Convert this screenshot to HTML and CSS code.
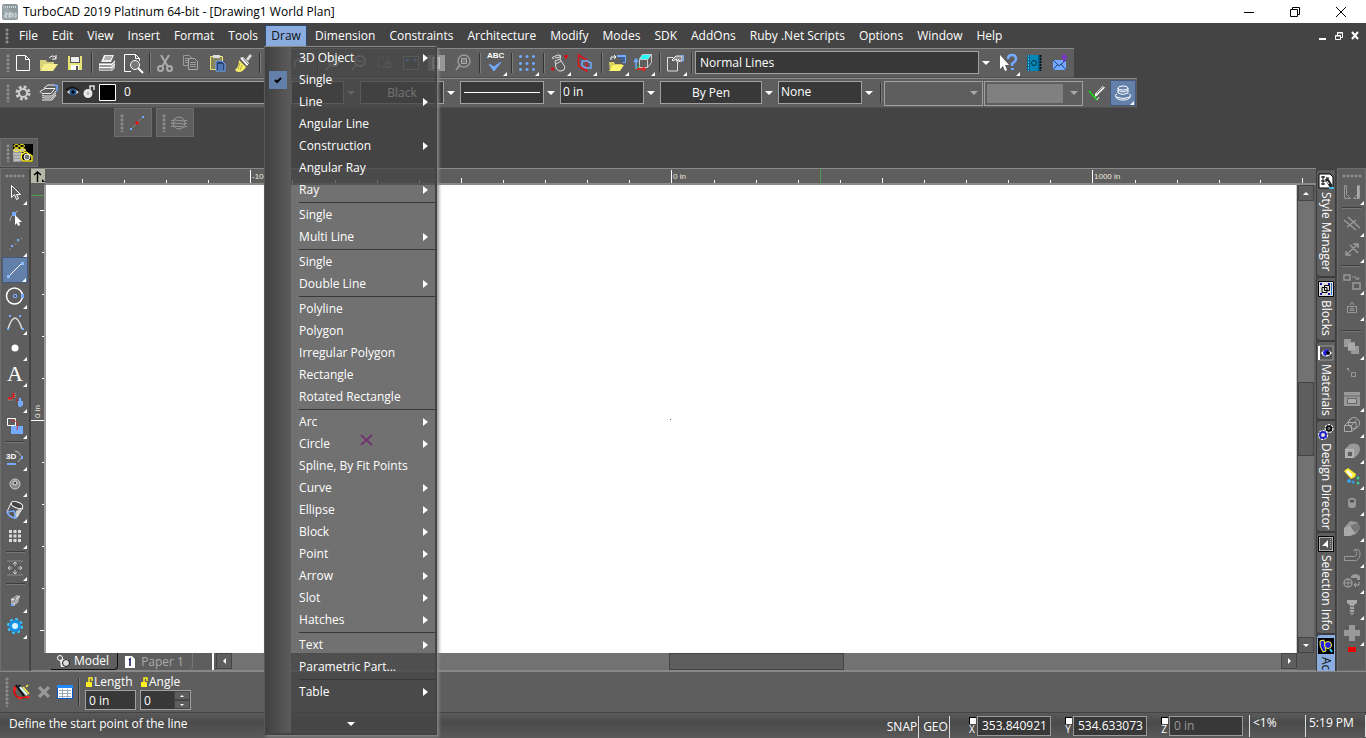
FILE: index.html
```
<!DOCTYPE html>
<html lang="en">
<head>
<meta charset="utf-8">
<title>TurboCAD 2019 Platinum 64-bit - [Drawing1 World Plan]</title>
<link rel="stylesheet" href="styles.css">
</head>
<body>
<header class="titlebar">
  <svg class="app-icon" viewBox="0 0 16 16"><rect width="16" height="16" rx="2" fill="#8d9a9d"/><path d="M1 3h14" stroke="#d5dcde" stroke-width="2" stroke-dasharray="1 1"/><path d="M1 1l14 9v5H1z" fill="#a5b0b2" opacity=".6"/><path d="M3 9h2v2H3v2h2M7 9h2v4H7zM11 9v4M13 9h1v4h-1" fill="none" stroke="#dfe5e6"/></svg>
  <h1 class="title">TurboCAD 2019 Platinum 64-bit - [Drawing1 World Plan]</h1>
  <div class="window-buttons">
    <button aria-label="Minimize"><svg viewBox="0 0 12 12"><path d="M1 6.500h10" stroke="#000"/></svg></button>
    <button aria-label="Restore"><svg viewBox="0 0 12 12"><path d="M1.500 3.500h7v7h-7zM3.500 3V1.500h7v7H9" fill="none" stroke="#000"/></svg></button>
    <button aria-label="Close"><svg viewBox="0 0 12 12"><path d="M1 1l10 10M11 1L1 11" stroke="#000"/></svg></button>
  </div>
</header>

<nav class="menubar">
  <span class="grip"></span>
  <button>File</button><button>Edit</button><button>View</button><button>Insert</button><button>Format</button><button>Tools</button>
  <div class="menu-host">
    <button class="open">Draw</button>
    <div class="menu">
      <button class="sub">3D Object</button>
      <button class="checked"><svg class="tick" viewBox="0 0 18 18"><path d="M6 9l2 2 4-4" fill="none" stroke="#000" stroke-width="2"/></svg>Single</button>
      <button class="sub">Line</button>
      <button>Angular Line</button>
      <button class="sub">Construction</button>
      <button>Angular Ray</button>
      <button class="sub">Ray</button>
      <hr>
      <button>Single</button>
      <button class="sub">Multi Line</button>
      <hr>
      <button>Single</button>
      <button class="sub">Double Line</button>
      <hr>
      <button>Polyline</button>
      <button>Polygon</button>
      <button>Irregular Polygon</button>
      <button>Rectangle</button>
      <button>Rotated Rectangle</button>
      <hr>
      <button class="sub">Arc</button>
      <button class="sub">Circle</button>
      <button>Spline, By Fit Points</button>
      <button class="sub">Curve</button>
      <button class="sub">Ellipse</button>
      <button class="sub">Block</button>
      <button class="sub">Point</button>
      <button class="sub">Arrow</button>
      <button class="sub">Slot</button>
      <button class="sub">Hatches</button>
      <hr>
      <button class="sub">Text</button>
      <button>Parametric Part...</button>
      <hr>
      <button class="sub">Table</button>
      <div class="menu-more"></div>
    </div>
  </div>
  <button>Dimension</button><button>Constraints</button><button>Architecture</button><button>Modify</button><button>Modes</button><button>SDK</button><button>AddOns</button><button>Ruby .Net Scripts</button><button>Options</button><button>Window</button><button>Help</button>
  <div class="doc-buttons">
    <button aria-label="Minimize drawing"><svg viewBox="0 0 10 10"><path d="M1 8h7" stroke="#fff" stroke-width="2"/></svg></button>
    <button aria-label="Restore drawing"><svg viewBox="0 0 10 10"><path d="M1.500 4.500h5v4h-5zM3.500 4V1.500h5v5H7M1 5h6M3 2h6" fill="none" stroke="#fff"/></svg></button>
    <button aria-label="Close drawing"><svg viewBox="0 0 10 10"><path d="M2 1l6 7M8 1L2 8" stroke="#fff" stroke-width="2"/></svg></button>
  </div>
</nav>

<div class="toolbar">
  <span class="grip"></span>
  <button class="tool" aria-label="New"><svg viewBox="0 0 22 22"><path d="M4.500 3.500h9l4 4v11h-13zM13.500 3.500v4h4" fill="none" stroke="#fff"/></svg></button>
  <button class="tool" aria-label="Open"><svg viewBox="0 0 22 22"><path d="M2 8h6l1 2h7v3H7l-5 5z" fill="#d8d27c"/><path d="M6 12h14l-5 7H2z" fill="#f6ef8c"/><path d="M11 6q4-4 7 0M18 3v4h-4" fill="none" stroke="#fff"/></svg></button>
  <button class="tool" aria-label="Save"><svg viewBox="0 0 22 22"><path d="M4 4h14v14H4z" fill="#e6e477"/><path d="M6 4h10v7H6z" fill="#555"/><path d="M7 5h8v5H7z" fill="#eee"/><path d="M7 13h8v5H7z" fill="#fff"/><path d="M12 14h2v4h-2z" fill="#555"/></svg></button>
  <i class="sep"></i>
  <button class="tool" aria-label="Print"><svg viewBox="0 0 22 22"><path d="M8 3h10l-3 7H5z" fill="#eee"/><path d="M9 5h7M8 7h7" stroke="#777"/><path d="M3 11h13l3-3v8l-3 3H3z" fill="#bbb"/><path d="M3 12.500h13M3 15.500h13M16 12l3-3M16 15l3-3" stroke="#fff"/><path d="M4 14h11M4 17h11" stroke="#777"/></svg></button>
  <button class="tool" aria-label="Print preview"><svg viewBox="0 0 22 22"><path d="M9 19.500H2.500v-17h11l4 4V9M13.500 2.500v4h4" fill="none" stroke="#fff"/><circle cx="13" cy="13" r="4.500" fill="#777" stroke="#fff"/><path d="M16 16l5 5" stroke="#fff" stroke-width="2"/></svg></button>
  <i class="sep"></i>
  <button class="tool" aria-label="Cut"><svg viewBox="0 0 22 22"><path d="M7 3l7 12M15 3L8 15" stroke="#aaa" stroke-width="2"/><circle cx="6.500" cy="16.500" r="2.500" fill="none" stroke="#aaa" stroke-width="2"/><circle cx="15.500" cy="16.500" r="2.500" fill="none" stroke="#aaa" stroke-width="2"/></svg></button>
  <button class="tool" aria-label="Copy"><svg viewBox="0 0 22 22"><path d="M3.500 3.500h6l2 2v8h-8z" fill="#5e5e5e" stroke="#999"/><path d="M8.500 6.500h6l3 3v8h-9z" fill="#5e5e5e" stroke="#aaa"/><path d="M5 6.500h3M5 8.500h3M5 10.500h3M10 10.500h6M10 12.500h6M10 14.500h6" stroke="#999"/></svg></button>
  <button class="tool" aria-label="Paste"><svg viewBox="0 0 22 22"><path d="M4.500 4.500h12v13h-12z" fill="#88845c" stroke="#eee478"/><path d="M7 3h7v3H7z" fill="#ddd"/><path d="M10 9h6l3 3v7h-9z" fill="#29456e" stroke="#74aaff"/><path d="M12 13h5M12 15h5M12 17h5" stroke="#74aaff"/></svg></button>
  <button class="tool" aria-label="Format painter"><svg viewBox="0 0 22 22"><path d="M14 7l4-5 2 2-4 5z" fill="#d9d9d9"/><path d="M8 6l3-1 6 6-2 3z" fill="#fff"/><path d="M11 6l5 6" stroke="#777"/><path d="M7 8l7 7q-3 5-7 5-3 0-4-2 4-3 4-10z" fill="#f5ec68"/><path d="M8 11l-2 6M10 13l-2 5" stroke="#b5a93a"/></svg></button>
  <i class="sep"></i>
  <button class="tool" aria-label="Undo"><svg viewBox="0 0 22 22"><path d="M5 10h8q4 0 4 4" fill="none" stroke="#999" stroke-width="2"/></svg></button>
  <button class="tool" aria-label="Redo"><svg viewBox="0 0 22 22"><path d="M5 16q-3-9 7-9h4M13 4l4 3-4 4" fill="none" stroke="#999" stroke-width="2"/></svg></button>
  <i class="sep"></i>
  <button class="tool" aria-label="Zoom in"><svg viewBox="0 0 22 22"><circle cx="12" cy="9" r="5" fill="none" stroke="#aaa" stroke-width="2"/><path d="M8 13l-4 5M9 9h6M12 6v6" stroke="#aaa" stroke-width="1.500"/></svg></button>
  <button class="tool" aria-label="Zoom out"><svg viewBox="0 0 22 22"><circle cx="12" cy="9" r="5" fill="none" stroke="#aaa" stroke-width="2"/><path d="M8 13l-4 5M9 9h6" stroke="#aaa" stroke-width="1.500"/></svg></button>
  <button class="tool" aria-label="Zoom window"><svg viewBox="0 0 22 22"><path d="M4 5h10v10H4z" fill="none" stroke="#999" stroke-dasharray="2"/><circle cx="14" cy="13" r="3" fill="none" stroke="#aaa"/></svg></button>
  <button class="tool" aria-label="Zoom extents"><svg viewBox="0 0 22 22"><path d="M3.500 4.500h15v13h-15z" fill="#555" stroke="#999"/><path d="M5 8h4M7 6v4M13 8h4M15 6v4" stroke="#6fa8ff"/></svg></button>
  <button class="tool" aria-label="Full view"><svg viewBox="0 0 22 22"><path d="M2 3h17v16H2z" fill="#999"/><path d="M6 5h8v12H6z" fill="#ddd"/><path d="M8 8h4M8 10h4M8 12h4" stroke="#555"/></svg></button>
  <button class="tool" aria-label="Zoom selection"><svg viewBox="0 0 22 22"><circle cx="12" cy="9" r="6" fill="none" stroke="#999" stroke-width="1.500"/><path d="M9.500 6.500h5v5h-5z" fill="#777" stroke="#aaa"/><path d="M8 13l-4 5" stroke="#999" stroke-width="2"/></svg></button>
  <i class="sep"></i>
  <button class="tool more" aria-label="Spelling"><span class="abc">ABC</span><svg viewBox="0 0 22 22"><path d="M5 12l5 7 7-9-7 5z" fill="#74aaff" stroke="#74aaff"/></svg></button>
  <i class="sep"></i>
  <button class="tool more" aria-label="Grid"><svg viewBox="0 0 22 22"><path d="M3 4.500h3M9.500 4.500h3M16 4.500h3M3 11.500h3M9.500 11.500h3M16 11.500h3M3 17.500h3M9.500 17.500h3M16 17.500h3M4.500 3v3M11 3v3M17.500 3v3M4.500 10v3M11 10v3M17.500 10v3M4.500 16v3M11 16v3M17.500 16v3" stroke="#74aaff" stroke-width="1.500"/></svg></button>
  <i class="sep"></i>
  <button class="tool more" aria-label="Snap"><svg viewBox="0 0 22 22"><path d="M7 9l5-2 5 8q0 4-4 4-3 1-5-3zM8 12l5-3M6 7q-3-1-1-2l5-2q4 0 2 2L7 6M11 3q3 1 1 4" fill="none" stroke="#ddd"/><path d="M16 4h4M18 4v3M3 17h3M4.500 15.500v3" stroke="#e00" stroke-width="1.500"/></svg></button>
  <button class="tool more" aria-label="Workplane"><svg viewBox="0 0 22 22"><path d="M4.500 3l8 5v11l-8-5z" fill="none" stroke="#e0121d" stroke-width="1.500"/><path d="M8 9v5M8 9h5l4 2v5h-5l-4-2" fill="none" stroke="#74aaff" stroke-width="1.500"/></svg></button>
  <i class="sep"></i>
  <button class="tool more" aria-label="Load workspace"><svg viewBox="0 0 22 22"><path d="M3 10h5l1 2h7v3H7l-3 4z" fill="#d9d05b"/><path d="M7 13h11l-4 6H3z" fill="#fbf46f"/><path d="M11.500 3.500h8v7h-3" fill="#41618d" stroke="#74aaff"/><path d="M11 4h9" stroke="#74aaff" stroke-width="2"/><path d="M5 8V5h5M8 3l2 2-2 2" fill="none" stroke="#fff"/></svg></button>
  <button class="tool more" aria-label="Camera"><svg viewBox="0 0 22 22"><path d="M10 3h9l-3 4H7z" fill="#2ff"/><path d="M7.500 7.500h8v8h-8zM15.500 7.500l4-5v8l-4 5M7.500 7.500l3-5h9" fill="none" stroke="#ccc"/><path d="M4 17V8M2 10l2-3 2 3" stroke="#74aaff" fill="none" stroke-width="1.500"/><path d="M4 17h9M11 15l2 2-2 2" stroke="#e22" fill="none" stroke-width="1.500"/><path d="M4 17l4-4" stroke="#2c4"/></svg></button>
  <i class="sep"></i>
  <button class="tool more" aria-label="Properties"><svg viewBox="0 0 22 22"><path d="M13.500 10v9h-10V5.500h6" fill="none" stroke="#ddd"/><path d="M8 8l4-4h6v5h-4l-2-2-3 2z" fill="#888" stroke="#eee"/><path d="M12 8l2 3M14 7l2 3" stroke="#eee"/><path d="M17 3.500h2.500V9H17" fill="none" stroke="#74aaff"/></svg></button>
  <i class="sep"></i>
  <div class="combo style-combo"><select aria-label="Style"><option>Normal Lines</option></select></div>
  <button class="tool more" aria-label="Context help"><svg viewBox="0 0 22 22"><path d="M3 3v14l3-3 2 5 2-1-2-5h4z" fill="#fff"/><path d="M11 7q0-4 4-4t4 4q0 2-4 5v2" fill="none" stroke="#74aaff" stroke-width="2.500"/><path d="M14 16h3v2h-3z" fill="#74aaff"/></svg></button>
  <button class="tool" aria-label="Web book"><svg viewBox="0 0 22 22"><path d="M4 3h14v16H4z" fill="#06628c"/><path d="M7 3h8v16H7z" fill="#0787b8"/><circle cx="11" cy="11" r="2.500" fill="none" stroke="#034"/><path d="M5.500 3v16" stroke="#4bd" stroke-dasharray="2 1"/><path d="M17.500 3v16" stroke="#111" stroke-width="2" stroke-dasharray="2 1"/></svg></button>
  <button class="tool" aria-label="Send mail"><svg viewBox="0 0 22 22"><path d="M4 8h13v10H4z" fill="#74aaff"/><path d="M4 8l6 6 7-6M4 18l5-6M17 18l-5-6" fill="none" stroke="#1f3f78"/><path d="M15 10V4M13 6l2-3 3 3" fill="none" stroke="#73c" stroke-width="2"/></svg></button>
</div>

<div class="toolbar">
  <span class="grip"></span>
  <button class="tool" aria-label="Settings"><svg viewBox="0 0 22 22"><circle cx="11" cy="11" r="6" fill="none" stroke="#ccc" stroke-width="3" stroke-dasharray="2.700 2"/><circle cx="11" cy="11" r="4" fill="none" stroke="#ccc" stroke-width="2"/></svg></button>
  <button class="tool" aria-label="Layers"><svg viewBox="0 0 22 22"><path d="M2 9.500l5-3h10l-4 5H4zM4 13l2 1h8l4-5M4 15l2 1h8l4-5M4 18h10l4-5M6 6l4-3h7" fill="none" stroke="#eee"/><path d="M16 3.500h3v6" fill="none" stroke="#74aaff" stroke-width="1.500"/></svg></button>
  <div class="combo layer-combo">
    <svg class="layer-icons" viewBox="0 0 56 22"><path d="M4 11q6-6 12 0-6 6-12 0z" fill="#ddd"/><circle cx="10" cy="11" r="3.500" fill="#234e86"/><circle cx="10" cy="11" r="1.500" fill="#000"/><path d="M3 9q7-6 13 1" fill="none" stroke="#111" stroke-width="1.500"/><circle cx="25" cy="12.500" r="4.500" fill="#e6e6e6"/><path d="M27 9V5h4v4" fill="none" stroke="#ddd" stroke-width="1.500"/><path d="M25 11v3" stroke="#888"/><path d="M36.500 3.500h16v16h-16z" fill="#000" stroke="#fff"/></svg>
    <select aria-label="Layer"><option>0</option></select>
  </div>
  <div class="combo narrow-combo off"><select aria-label="Pen source"><option></option></select></div>
  <div class="combo centered"><select aria-label="Color"><option>Black</option></select></div>
  <div class="combo line-combo"><select aria-label="Line pattern"><option></option></select></div>
  <div class="combo"><select aria-label="Line width"><option>0 in</option></select></div>
  <div class="combo centered wide"><select aria-label="Brush color"><option>By Pen</option></select></div>
  <div class="combo"><select aria-label="Brush pattern"><option>None</option></select></div>
  <i class="sep gap"></i>
  <div class="combo flat"><select aria-label="Material" disabled><option></option></select></div>
  <div class="combo flat filled"><select aria-label="Material preview" disabled><option></option></select></div>
  <button class="tool" aria-label="Pick style"><svg viewBox="0 0 22 22"><path d="M10 11l7-7 2 2-7 7z" fill="#eee" stroke="#ccc"/><path d="M11 11l7-7M12 13l7-7" stroke="#777"/><path d="M9 11v4l3-2" fill="#fff"/><path d="M3 9l8 9" stroke="#1d1" stroke-width="1.500"/><path d="M11 18l2-3" stroke="#eee"/></svg></button>
  <button class="tool more on" aria-label="Render"><svg viewBox="0 0 22 22"><ellipse cx="11" cy="6" rx="5" ry="2" fill="none" stroke="#fff"/><path d="M6 6v5q5 3 10 0V6M6 8.500q5 3 10 0M5 12q-3 1-1 3 7 3 14 0 2-2-1-3M4 15q1 3 7 3t7-3" fill="none" stroke="#fff"/></svg></button>
</div>

<div class="dock dock-indent">
  <div class="mini"><span class="grip"></span><button class="tool" aria-label="Line tool"><svg viewBox="0 0 22 22"><path d="M5 17L17 5" stroke="#999" stroke-dasharray="2 1"/><path d="M4 16h2v2H4zM16 4h2v2h-2z" fill="#74aaff"/><path d="M9.500 9.500h3v3h-3z" fill="#e11"/></svg></button></div>
  <div class="mini"><span class="grip"></span><button class="tool" aria-label="Sphere tool"><svg viewBox="0 0 22 22"><circle cx="11" cy="11" r="6" fill="none" stroke="#999"/><path d="M3 8.500q4-1 8 0t8 0M3 11.500q4-1 8 0t8 0M3 14.500q4-1 8 0t8 0" fill="none" stroke="#999"/></svg></button></div>
</div>
<div class="dock">
  <div class="mini"><span class="grip"></span><button class="tool" aria-label="Database"><svg viewBox="0 0 22 22"><path d="M1 2h20v18H1z" fill="#000"/><path d="M1 8h9v12H1z" fill="#999"/><ellipse cx="4.500" cy="4" rx="2.500" ry="1.500" fill="none" stroke="#fe2"/><ellipse cx="10" cy="4" rx="2.500" ry="1.500" fill="none" stroke="#fe2"/><ellipse cx="4.500" cy="8" rx="3" ry="1.500" fill="#bbb" stroke="#fe2"/><ellipse cx="10.500" cy="8" rx="3" ry="1.500" fill="#bbb" stroke="#fe2"/><path d="M1 12h9M2 15h6M2 18h6" stroke="#ddd"/><path d="M10 12l4-2 6 4v5h-9q-3-3-1-7z" fill="none" stroke="#fe2" stroke-width="1.500"/><circle cx="15" cy="15" r="3" fill="#777" stroke="#fff"/></svg></button></div>
</div>

<main class="workspace">
  <aside class="side left">
    <span class="grip-h"></span>
    <button class="tool more" aria-label="Select"><svg viewBox="0 0 22 22"><path d="M7.500 4.500v12l3-3 2 5 2-1-2-4h4z" fill="#5e5e5e" stroke="#fff"/></svg></button>
    <button class="tool" aria-label="Edit node"><svg viewBox="0 0 22 22"><path d="M6 14q0-6 8-10" fill="none" stroke="#aaa"/><path d="M8 5h4v4H8z" fill="#74aaff"/><path d="M11 8v10l2-2 1 3 2-1-1-3h3z" fill="#fff"/></svg></button>
    <button class="tool more" aria-label="Construction"><svg viewBox="0 0 22 22"><path d="M5 17L19 4" stroke="#999" stroke-dasharray="2"/><path d="M7 12h2v2H7zM13 6h2v2h-2z" fill="#74aaff"/></svg></button>
    <button class="tool more on" aria-label="Line"><svg viewBox="0 0 22 22"><path d="M4 18L18 4" stroke="#fff"/><path d="M3 16h3v3H3zM17 3h3v3h-3z" fill="#8fbcff"/></svg></button>
    <button class="tool more" aria-label="Circle"><svg viewBox="0 0 22 22"><circle cx="10.500" cy="11" r="8" fill="none" stroke="#fff" stroke-width="1.500"/><path d="M9.500 9.500h3v3h-3z" fill="none" stroke="#74aaff"/><path d="M17 9h3v4h-3z" fill="#74aaff"/></svg></button>
    <button class="tool more" aria-label="Curve"><svg viewBox="0 0 22 22"><path d="M4 18Q11-4 18 18" fill="none" stroke="#ddd" stroke-width="1.500"/><path d="M5 4h2v2H5zM15 4h2v2h-2zM3 17h2v2H3zM18 17h2v2h-2z" fill="#74aaff"/></svg></button>
    <button class="tool more" aria-label="Point"><svg viewBox="0 0 22 22"><circle cx="11" cy="11" r="3.500" fill="#fff"/></svg></button>
    <button class="tool more letter" aria-label="Text">A</button>
    <button class="tool more" aria-label="Snap tools"><svg viewBox="0 0 22 22"><path d="M9.500 4v5M4 9.500h4" fill="none" stroke="#e11" stroke-width="2"/><path d="M11 4v5M4 11h6" stroke="#aaa" stroke-dasharray="1"/><path d="M12 10h1v2h-1z" fill="#e11"/><path d="M14 12h5v4l-2 2h-2l-1-2z" fill="#74aaff"/><path d="M16 9v3" stroke="#74aaff" stroke-width="2"/></svg></button>
    <button class="tool more" aria-label="Modify"><svg viewBox="0 0 22 22"><path d="M7 11h12v8H7z" fill="#74aaff"/><path d="M3.500 3.500h8v7h-8z" fill="none" stroke="#fff"/><path d="M7 5q9 0 6 10" fill="none" stroke="#d33"/></svg></button>
    <i class="sep-h"></i>
    <button class="tool more" aria-label="3D tools"><span class="three">3D</span><svg viewBox="0 0 22 22"><path d="M11 4l3 1 4 5-4 5" fill="none" stroke="#bbb"/><path d="M3 17h9M18 9v3" stroke="#74aaff" stroke-width="2"/></svg></button>
    <button class="tool more" aria-label="Sphere"><svg viewBox="0 0 22 22"><circle cx="11" cy="11" r="5" fill="#888" stroke="#ccc"/><circle cx="11" cy="10" r="2" fill="#444" stroke="#eee"/></svg></button>
    <button class="tool more" aria-label="Cylinder"><svg viewBox="0 0 22 22"><path d="M8 4l11 4v3l-6 7-9-5z" fill="#555"/><path d="M12 12l6-4-4 10h-4z" fill="#ccc"/><ellipse cx="13" cy="6" rx="6" ry="3" fill="#444" stroke="#fff" transform="rotate(20 13 6)"/><path d="M7 4l-4 9q3 6 9 6l7-10" fill="none" stroke="#eee"/><path d="M3 13l7-1 2 7q-7 0-9-6" fill="none" stroke="#74aaff" stroke-width="1.500"/></svg></button>
    <button class="tool more" aria-label="Mesh"><svg viewBox="0 0 22 22"><path d="M5 6.500h12M5 11h12M5 15.500h12" stroke="#ddd" stroke-width="3" stroke-dasharray="3 1.500"/></svg></button>
    <i class="sep-h"></i>
    <button class="tool more" aria-label="Pan"><svg viewBox="0 0 22 22"><path d="M3 4h16M3 18h16" stroke="#888"/><path d="M11 5v4M11 13v4M4 11h4M14 11h4M9 7l2-2 2 2M9 15l2 2 2-2M6 9l-2 2 2 2M16 9l2 2-2 2" fill="none" stroke="#ccc"/></svg></button>
    <i class="sep-h"></i>
    <button class="tool more" aria-label="Wall"><svg viewBox="0 0 22 22"><path d="M7 10l6-4 3 1-2 7-6 3-1-2z" fill="#aaa"/><path d="M7 10l4 1-1 6M11 11l5-4" stroke="#eee" fill="none"/><path d="M12 8l-2 6" stroke="#777"/><path d="M7 16h3" stroke="#74aaff" stroke-width="2"/></svg></button>
    <button class="tool more" aria-label="Options"><svg viewBox="0 0 22 22"><circle cx="11" cy="11" r="7" fill="none" stroke="#3bc6ff" stroke-width="2" stroke-dasharray="3 2.500"/><circle cx="11" cy="11" r="4.500" fill="#d9f5ff" stroke="#1593e8" stroke-width="3"/></svg></button>
  </aside>

  <section class="drawing">
    <div class="ruler-row">
      <button class="origin" aria-label="Origin"><svg viewBox="0 0 14 14"><path d="M6.500 13V3M3 6l3.500-3L10 6" fill="none" stroke="#000" stroke-width="1.500"/><path d="M11 10l3 3h-3z" fill="#000"/></svg></button>
      <svg class="ruler" height="14"><path d="M37.500 14v-4M79.500 14v-3M121.500 14v-3M163.500 14v-3M205.500 14V1M247.500 14v-3M290.500 14v-3M332.500 14v-3M374.500 14v-3M416.500 14v-5M458.500 14v-3M500.500 14v-3M542.500 14v-3M584.500 14v-3M626.500 14V1M669.500 14v-3M711.500 14v-3M753.500 14v-3M795.500 14v-3M837.500 14v-5M879.500 14v-3M921.500 14v-3M963.500 14v-3M1005.500 14v-3M1047.500 14V1M1090.500 14v-3M1132.500 14v-3M1174.500 14v-3M1215.500 14v-3M1257.500 14v-5" stroke="#fff"/><path d="M775.500 0v14" stroke="#4f9e4f"/><text x="207" y="10">-1000 in</text><text x="628" y="10">0 in</text><text x="1049" y="10">1000 in</text></svg>
    </div>
    <div class="view-row">
      <svg class="ruler ruler-v" width="13"><path d="M14 25.500H9M14 67.500h-3M14 109.500h-3M14 151.500h-3M14 193.500h-3M14 235.500H0M14 277.500h-3M14 319.500h-3M14 361.500h-3M14 403.500h-3M14 445.500H9" stroke="#fff"/><path d="M0 10.500h14" stroke="#4f9e4f"/><text transform="translate(9 233) rotate(-90)">0 in</text></svg>
      <div class="canvas">
        <svg width="100%" height="100%"><path d="M315 250l11 10M326 250l-11 10" stroke="#f0f" stroke-width="2"/><path d="M624 234h1v1h-1z" fill="#555"/></svg>
      </div>
      <div class="vscroll"><button class="up" aria-label="Scroll up"></button><span class="vthumb"></span><button class="down" aria-label="Scroll down"></button></div>
    </div>
    <div class="tabs-row">
      <button class="sheet active"><svg viewBox="0 0 14 14"><circle cx="4" cy="4" r="2.500" fill="none" stroke="#fff"/><path d="M4 7l3-2h5v5l-2 3H5z" fill="#eee"/><circle cx="10" cy="9" r="3.500" fill="#ddd" stroke="#111"/></svg>Model</button>
      <button class="sheet"><svg viewBox="0 0 14 14"><path d="M2 1h7l3 3v9H2z" fill="#fff"/><path d="M6 5l1-1v7" fill="none" stroke="#115" stroke-width="1.500"/></svg>Paper 1</button>
      <span class="split"></span>
      <div class="hscroll"><button class="prev" aria-label="Scroll left"></button><span class="hthumb"></span><button class="next" aria-label="Scroll right"></button></div>
    </div>
  </section>

  <nav class="palettes">
    <button class="p-style"><svg viewBox="0 0 16 16"><path d="M1 1h11l3 3v11H1z" fill="#fff" stroke="#000"/><path d="M3 4h4M5 3v9M8 5h3M3 8h6M3 11h4" stroke="#000"/><path d="M7 6l3-1 5 8-3 2z" fill="#222"/><path d="M9 8l2 3" stroke="#fff"/><path d="M11 15h5" stroke="#4bd" stroke-width="2"/></svg>Style Manager</button>
    <button class="p-blocks"><svg viewBox="0 0 16 16"><path d="M.500.500h15v15H.500z" fill="#ddd" stroke="#000"/><path d="M4 6.500h5v5H4zM6.500 4.500h5v5h-5z" fill="none" stroke="#000"/><path d="M2 2h2v2H2zM10 2h2v2h-2zM2 12h2v2H2zM10 12h2v2h-2z" fill="#11a"/><path d="M13.500 2v12" stroke="#27c"/></svg>Blocks</button>
    <button class="p-mat"><svg viewBox="0 0 16 16"><path d="M1 1h14v14H1z" fill="#555" stroke="#999"/><path d="M1 1v14" stroke="#fff" stroke-width="2"/><path d="M3 8q5-7 11 0-6 7-11 0z" fill="#fff"/><path d="M5 7q2-4 6-2l-3 6q-3 0-3-4z" fill="#22d"/><circle cx="10" cy="8" r="2" fill="#000"/></svg>Materials</button>
    <button class="p-design"><svg viewBox="0 0 16 16"><circle cx="11" cy="4.500" r="3.500" fill="#666" stroke="#fff" stroke-width="2" stroke-dasharray="2 1"/><circle cx="11" cy="4.500" r="2.500" fill="none" stroke="#000" stroke-width="1.500"/><circle cx="5" cy="11" r="4" fill="#ddd" stroke="#fff" stroke-width="2" stroke-dasharray="2 1"/><circle cx="5" cy="11" r="3" fill="#ddd" stroke="#22c" stroke-width="2"/></svg>Design Director</button>
    <button class="p-sel"><svg viewBox="0 0 16 16"><path d="M1 1h14v14H1z" fill="#555" stroke="#fff"/><path d="M.500.500h15v15H.500z" fill="none" stroke="#000"/><path d="M4 10l6-6v8l-2-2z" fill="#fff"/><path d="M12.500 3v10" stroke="#aaa" stroke-dasharray="1"/></svg>Selection Info</button>
    <button class="p-active"><svg viewBox="0 0 16 16"><path d="M0 0h16v16H0z" fill="#000"/><path d="M2 3l4-1 2 11-3 1q-4-6-3-11z" fill="#22d" stroke="#ff3"/><circle cx="10" cy="7" r="3.500" fill="#22d" stroke="#ff3"/><path d="M12 11l2 3" stroke="#3cf" stroke-width="2"/></svg>Ac</button>
  </nav>

  <aside class="side right">
    <span class="grip-h"></span>
    <button class="tool more" aria-label="Trim"><svg viewBox="0 0 22 22"><path d="M3.500 4.500h2v9l4 4h-6zM18.500 4.500h-2v9l-4 4h6z" fill="none" stroke="#999"/><path d="M17 5v12" stroke="#aaa" stroke-width="2"/></svg></button>
    <i class="sep-h"></i>
    <button class="tool more" aria-label="Parallel"><svg viewBox="0 0 22 22"><path d="M3 7l12 10M7 4l12 11M6 14l9-7" stroke="#999" stroke-width="1.500"/></svg></button>
    <button class="tool more" aria-label="Stretch"><svg viewBox="0 0 22 22"><path d="M5 16L17 5M5 12v4h5M12 5h5v4M9 6l8 8" fill="none" stroke="#999" stroke-width="1.500"/></svg></button>
    <i class="sep-h"></i>
    <button class="tool more" aria-label="Copy linear"><svg viewBox="0 0 22 22"><path d="M3 4h6v5H3zM12 12h7v6h-7z" fill="none" stroke="#999" stroke-width="1.500"/><path d="M11 6q5-1 6 3M14 7l3 2 1-3" fill="none" stroke="#999"/></svg></button>
    <button class="tool more" aria-label="Assemble"><svg viewBox="0 0 22 22"><path d="M6.500 9.500h9v6h-9zM9 8l2-3 2 3M9.500 11.500h3v2h-3z" fill="none" stroke="#999"/></svg></button>
    <i class="sep-h late"></i>
    <button class="tool more" aria-label="Order"><svg viewBox="0 0 22 22"><path d="M3 3h7v3h4v4h4v8h-8v-3H7v-4H3z" fill="#999"/><path d="M7 7h7v7H7z" fill="#aaa"/></svg></button>
    <button class="tool" aria-label="Explode"><svg viewBox="0 0 22 22"><path d="M6 6h2v2H6zM8 9h1v1H8z" fill="#999"/><path d="M10.500 10.500h4v4h-4z" fill="none" stroke="#999"/></svg></button>
    <button class="tool more" aria-label="Group"><svg viewBox="0 0 22 22"><path d="M3 4h16v14H3z" fill="#999"/><path d="M3 8h16M6.500 10.500h9v5h-9z" stroke="#666" fill="#aaa"/></svg></button>
    <button class="tool more" aria-label="Add"><svg viewBox="0 0 22 22"><circle cx="13" cy="9" r="5.500" fill="none" stroke="#aaa"/><path d="M3.500 11.500h7v6h-7zM3.500 11.500l7-7M10.500 11.500l5-6M10.500 17.500l5-4M7 8.500h8v5" fill="none" stroke="#aaa"/></svg></button>
    <button class="tool more" aria-label="Subtract"><svg viewBox="0 0 22 22"><path d="M4 9l5-5q9-2 10 5 0 5-6 9H4z" fill="#999"/><path d="M4.500 9.500h8v8h-8z" fill="#aaa" stroke="#bbb"/><path d="M7 12h4v4H7z" fill="#5e5e5e"/></svg></button>
    <button class="tool more" aria-label="Paint"><svg viewBox="0 0 22 22"><path d="M3 5l4-3 8 6-1 3-4 2z" fill="#fe3"/><path d="M6 5l5 5" stroke="#fff" stroke-width="2.500"/><path d="M6 15h4M8 13v4" stroke="#3af" stroke-width="1.500"/><circle cx="17" cy="12" r="1.500" fill="#3c9"/><circle cx="12" cy="16" r="1.500" fill="#39d"/><circle cx="17" cy="17" r="1.500" fill="#3c9"/></svg></button>
    <button class="tool more" aria-label="Barrel"><svg viewBox="0 0 22 22"><rect x="7" y="6" width="8" height="10" rx="3" fill="#999"/><ellipse cx="11" cy="9" rx="2.500" ry="1.500" fill="#555"/></svg></button>
    <button class="tool more" aria-label="Chamfer"><svg viewBox="0 0 22 22"><path d="M3 10l6-7 7 1 3 6-4 6-6 2H3z" fill="#999"/><path d="M9 8l7-3 3 5-5 5z" fill="#777"/><path d="M3 10l6-2 5 7-5 3H3z" fill="#aaa"/></svg></button>
    <button class="tool more" aria-label="Bend"><svg viewBox="0 0 22 22"><path d="M3.500 12.500h10q4-2 1-7h3q4 6-2 11h-12zM12 7l3-2" fill="none" stroke="#999"/></svg></button>
    <button class="tool more" aria-label="Replace"><svg viewBox="0 0 22 22"><circle cx="7" cy="13" r="4" fill="none" stroke="#999" stroke-width="1.500"/><path d="M3 13h8M7 9v8" stroke="#999"/><path d="M10 6q4-4 9 0v4h-3V8h-6z" fill="#999"/><path d="M18 12v3h-5M15 13l-2 2 2 2" fill="none" stroke="#aaa"/></svg></button>
    <button class="tool more" aria-label="Screw"><svg viewBox="0 0 22 22"><path d="M6 4h10v3l-3 2v8l-2 2-2-2V9L6 7z" fill="#aaa"/><path d="M8 10l6 1M8 13l6 1M8 16l6 1" stroke="#666"/></svg></button>
    <button class="tool more plus" aria-label="Append"><svg viewBox="0 0 22 22"><path d="M8 3h6v5h5v6h-5v5H8v-5H3V8h5z" fill="#999"/></svg></button>
    <span class="stop"></span>
  </aside>
</main>

<section class="inspector">
  <span class="grip tall"></span>
  <button class="tool" aria-label="Polyline mode"><svg viewBox="0 0 22 22"><path d="M4 5q-3 10 5 12l8-1" fill="none" stroke="#e00" stroke-width="1.500"/><path d="M5 4l8 11M8 4l3 4" stroke="#111" stroke-width="2"/><path d="M9 6l7 8" stroke="#dff" stroke-width="2"/><path d="M15 6l2-2M12 6l6 7" stroke="#fe4" stroke-width="1.500"/><circle cx="4" cy="8" r="1.500" fill="#f22"/><circle cx="9" cy="17" r="1.500" fill="#f22"/><circle cx="17" cy="16" r="1.500" fill="#f22"/></svg></button>
  <button class="tool small" aria-label="Cancel"><svg viewBox="0 0 22 22"><path d="M5 5l12 12M17 5L5 17" stroke="#999" stroke-width="4"/></svg></button>
  <button class="tool" aria-label="Table"><svg viewBox="0 0 22 22"><path d="M3.500 4.500h15v13h-15z" fill="#fff" stroke="#05c"/><path d="M3 5.500h16" stroke="#28f" stroke-width="3"/><path d="M5 9.500h12M5 12.500h12M5 15.500h12M8.500 8v9M13.500 8v9" stroke="#9ab"/></svg></button>
  <i class="sep"></i>
  <div class="field"><label for="length"><svg viewBox="0 0 8 10"><path d="M1 5h6v5H1z" fill="#fe2"/><path d="M4 5V1h3v3" fill="none" stroke="#fe2" stroke-width="1.500"/></svg>Length</label><input id="length" value="0 in"></div>
  <div class="field"><label for="angle"><svg viewBox="0 0 8 10"><path d="M1 5h6v5H1z" fill="#fe2"/><path d="M4 5V1h3v3" fill="none" stroke="#fe2" stroke-width="1.500"/></svg>Angle</label><div class="spin"><input id="angle" value="0"><div class="spin-buttons"><button class="inc" aria-label="Increase angle"></button><button class="dec" aria-label="Decrease angle"></button></div></div></div>
</section>

<footer class="statusbar">
  <p class="prompt">Define the start point of the line</p>
  <button class="mode">SNAP</button>
  <button class="mode">GEO</button>
  <div class="coord"><label class="axis"><input type="checkbox">X</label><input class="value" aria-label="X coordinate" value="353.840921 in"></div>
  <div class="coord"><label class="axis"><input type="checkbox">Y</label><input class="value" aria-label="Y coordinate" value="534.633073 in"></div>
  <div class="coord"><label class="axis"><input type="checkbox">Z</label><input class="value" aria-label="Z coordinate" value="0 in" disabled></div>
  <span class="cell load">&lt;1%</span>
  <span class="cell clock">5:19 PM</span>
</footer>
</body>
</html>
```

FILE: styles.css
```
* { box-sizing: border-box; }

body {
  margin: 0;
  height: 100vh;
  display: flex;
  flex-direction: column;
  overflow: hidden;
  background: #444;
  color: #fff;
  font: 12px/16px "Open Sans", "Noto Sans", sans-serif;
}

button, input, select {
  font: inherit;
  color: inherit;
  border: 0;
  margin: 0;
  padding: 0;
  background: none;
  border-radius: 0;
  outline: 0;
}

svg { display: block; flex: none; }

/* Title bar */
.titlebar {
  flex: none;
  height: 23px;
  display: flex;
  align-items: center;
  padding-left: 2px;
  background: #fff;
  color: #000;
}
.app-icon { width: 16px; height: 16px; }
.title { margin: 0 auto 0 5px; font-size: 12px; font-weight: 400; }
.window-buttons { display: flex; padding-right: 2px; }
.window-buttons button { width: 46px; height: 20px; display: grid; place-items: center; }
.window-buttons svg { width: 12px; height: 12px; }

/* Menu bar */
.menubar {
  flex: none;
  height: 25px;
  display: flex;
  align-items: center;
  padding-left: 5px;
}
.menubar button { height: 22px; padding: 0 7px; white-space: nowrap; }
.menubar .grip { margin-right: 3px; height: 16px; }
.menu-host { position: relative; margin-right: 1px; }
.menubar .open { width: 42px; background: #8aacde; color: #111; border: 1px solid #2c4770; padding: 0; }
.doc-buttons { display: flex; margin-left: auto; padding-right: 3px; }
.menubar .doc-buttons button { width: 16px; padding: 0 3px; }
.doc-buttons svg { width: 10px; height: 10px; }

.grip {
  flex: none;
  width: 4px;
  height: 18px;
  background: radial-gradient(circle, #8c8c8c 1px, transparent 2px) 0 0 / 4px 4px;
}

/* Draw menu */
.menu {
  position: absolute;
  z-index: 5;
  top: 21px;
  left: -1px;
  width: 173px;
  display: flex;
  flex-direction: column;
  padding-left: 27px;
  border: 1px solid #5a5a5a;
  border-top-color: #8a8a8a;
  border-right: 2px solid #444;
  border-bottom: 2px solid #444;
  background: linear-gradient(90deg, #404040, #5c5c5c) 0 0 / 26px 100% no-repeat, rgba(68, 68, 68, .76);
  background-origin: padding-box;
  box-shadow: 2px 2px 3px rgba(140, 140, 140, .9);
}
.menu button { position: relative; text-align: left; padding: 0 7px; }
.menu hr { height: 1px; margin: 1px 0 1px 7px; border: 0; background: #383838; }
.menu .sub::after {
  content: "";
  position: absolute;
  right: 7px;
  top: 7px;
  border: 4px solid transparent;
  border-left: 5px solid #fff;
  border-right: 0;
}
.tick { position: absolute; left: -23px; top: 2px; width: 18px; height: 18px; background: #6280a9; }
.menu-more { height: 30px; display: grid; place-items: center; padding: 13px 26px 0 0; }
.menu-more::after { content: ""; border: 4px solid transparent; border-top-color: #fff; border-bottom: 0; }

/* Toolbars */
.toolbar {
  flex: none;
  align-self: flex-start;
  height: 30px;
  display: flex;
  align-items: center;
  padding: 0 1px 0 6px;
  background: #5e5e5e;
  border-top: 1px solid #898989;
  border-bottom: 1px solid #505050;
}
.tool { position: relative; flex: none; width: 26px; height: 26px; display: grid; place-items: center; }
.tool svg { width: 22px; height: 22px; }
.tool.small svg { width: 18px; height: 18px; }
.more::after {
  content: "";
  position: absolute;
  right: 1px;
  bottom: 0;
  border-bottom: 4px solid #fff;
  border-left: 4px solid transparent;
}
.on { background: #6280a9; border: 1px solid #47597a; }
.sep { flex: none; width: 6px; height: 20px; border-left: 1px solid #333; background: linear-gradient(#7c7c7c, #7c7c7c) 0 0 / 1px 100% no-repeat; margin-left: 3px; margin-right: -3px; }
.sep.gap { width: 4px; margin: 0 0 0 2px; }
.abc { position: absolute; top: 1px; left: 5px; font: bold 8px/10px "Liberation Sans", Arial, sans-serif; z-index: 1; }

.combo { position: relative; flex: none; width: 100px; height: 24px; padding-right: 16px; }
.combo select {
  appearance: none;
  display: block;
  width: 100%;
  height: 23px;
  padding: 0 2px 2px;
  background: #383838;
  border: 1px solid #a0a0a0;
  color: #fff;
}
.combo::after {
  content: "";
  position: absolute;
  right: 5px;
  top: 10px;
  border: 4px solid transparent;
  border-top-color: #fff;
  border-bottom: 0;
}
.combo.wide { width: 118px; }
.combo.centered select { text-align: center; text-align-last: center; padding: 1px 0 0; }
.style-combo { width: 300px; margin-left: 1px; }
.style-combo select { padding: 0 4px; }
.layer-combo { width: 229px; }
.layer-combo select { padding-left: 61px; }
.layer-icons { position: absolute; left: 1px; top: 0; width: 56px; height: 22px; }
.narrow-combo { width: 69px; }
.off::after { border-top-color: #ccc; }
.line-combo select { background: linear-gradient(#fff, #fff) center / 76px 1px no-repeat, #383838; }
.combo.flat { width: 99px; padding: 0; margin-right: 1px; }
.flat select { height: 25px; background: #5e5e5e; opacity: 1; }
.flat.filled select { background: linear-gradient(#808080, #808080) 2px center / 76px 19px no-repeat, #5e5e5e; }
.flat::after { border-top-color: #aaa; }

.dock { flex: none; display: flex; height: 30px; gap: 4px; }
.dock-indent { padding-left: 114px; }
.mini {
  height: 29px;
  width: 38px;
  display: flex;
  align-items: center;
  padding-left: 5px;
  background: #5e5e5e;
  border: 1px solid #6c6c6c;
}

/* Workspace */
.workspace { flex: 1; min-height: 0; display: flex; }
.side {
  flex: none;
  width: 30px;
  display: flex;
  flex-direction: column;
  align-items: center;
  background: #5e5e5e;
  border: 1px solid #6e6e6e;
  overflow: hidden;
}
.left { border-right-color: #444; }
.right { width: 29px; }
.grip-h {
  flex: none;
  width: 20px;
  height: 4px;
  margin: 5px 0 1px;
  background: radial-gradient(circle, #8c8c8c 1px, transparent 2px) 0 0 / 4px 4px;
}
.sep-h { flex: none; width: 19px; height: 2px; margin: 2px 0; background: #3c3c3c; border-bottom: 1px solid #777; }
.sep-h.late { margin-top: 9px; }
.letter { font: 22px/26px "Liberation Serif", "Times New Roman", serif; }
.three { position: absolute; left: 4px; top: 7px; font: bold 8px/10px "Liberation Sans", Arial, sans-serif; }
.stop { width: 8px; height: 5px; margin-top: 1px; background: #e00; flex: none; }

.drawing {
  flex: 1;
  min-width: 0;
  display: flex;
  flex-direction: column;
  background: #5e5e5e;
  border-top: 1px solid #8a8a8a;
  border-left: 1px solid #444;
}
.ruler-row { flex: none; display: flex; height: 16px; }
.origin { width: 14px; height: 14px; background: #b7b7a8; }
.origin svg { width: 14px; height: 14px; }
.ruler { flex: 1; min-width: 0; border-bottom: 2px solid #8a8a8a; box-sizing: content-box; }
.ruler text { fill: #f0e6dc; font: 8px "Liberation Sans", Arial, sans-serif; }
.view-row { flex: 1; min-height: 0; display: flex; }
.ruler-v { flex: none; width: 13px; height: 100%; border: 0; border-right: 2px solid #999; }
.canvas { flex: 1; min-width: 0; background: #fff; overflow: hidden; border-right: 1px solid #ccc; }
.vscroll { width: 17px; margin-right: 2px; display: flex; flex-direction: column; background: #727272; border: 1px solid #444; border-width: 0 0 0 1px; }
.vscroll button, .hscroll button { flex: none; width: 16px; height: 16px; display: grid; place-items: center; background: #5e5e5e; border: 1px solid #444; }
.vscroll button::after, .hscroll button::after { content: ""; border: 3px solid transparent; }
.vscroll .up::after { border-bottom-color: #fff; border-top: 0; }
.vscroll .down::after { border-top-color: #fff; border-bottom: 0; }
.hscroll .prev::after { border-right-color: #fff; border-left: 0; }
.hscroll .next::after { border-left-color: #fff; border-right: 0; }
.vthumb { height: 16%; margin: auto 0; background: #5e5e5e; border: 1px solid #444; }
.tabs-row { flex: none; display: flex; height: 18px; padding: 0 19px 0 20px; border-bottom: 1px solid #888; }
.sheet { height: 17px; display: flex; align-items: center; gap: 4px; padding: 0 8px 0 5px; color: #aaa; border-right: 1px solid #777; border-radius: 0 0 4px 0; }
.sheet.active { color: #fff; border-right-color: #111; border-bottom: 1px solid #111; }
.sheet svg { width: 14px; height: 14px; }
.split { width: 2px; margin: 0 2px 0 auto; background: #fff; }
.hscroll { width: calc(100% - 165px); flex: none; display: flex; justify-content: space-between; background: #727272; }
.hthumb { width: 175px; background: #5e5e5e; border: 1px solid #444; }

/* Palette tabs */
.palettes { flex: none; width: 21px; display: flex; flex-direction: column; padding-top: 1px; background: #444; overflow: hidden; }
.palettes button {
  flex: none;
  writing-mode: vertical-rl;
  display: flex;
  align-items: center;
  gap: 3px;
  width: 20px;
  padding: 3px 0 0;
  background: #5e5e5e;
  border: 1px solid #3c3c3c;
  border-radius: 4px 0 0 4px;
  white-space: nowrap;
  overflow: hidden;
}
.palettes svg { width: 16px; height: 16px; }
.p-style { height: 108px; }
.p-blocks { height: 64px; }
.p-mat { height: 79px; }
.p-design { height: 112px; }
.p-sel { height: 102px; }
.palettes .p-active { height: 42px; background: #8aacde; color: #111; }

/* Inspector bar */
.inspector {
  flex: none;
  height: 42px;
  display: flex;
  align-items: center;
  padding: 0 5px;
  background: #5e5e5e;
  border-top: 1px solid #888;
  border-bottom: 1px solid #444;
}
.grip.tall { height: 30px; }
.inspector .small { width: 17px; }
.inspector .sep { height: 28px; margin: 0 1px 0 0; }
.field { width: 51px; margin-right: 4px; }
.field label { display: flex; align-items: center; gap: 1px; height: 16px; }
.field svg { width: 8px; height: 10px; }
.field input { display: block; width: 100%; height: 20px; padding: 0 3px; background: #383838; border: 1px solid #a0a0a0; }
.spin { display: flex; border: 1px solid #a0a0a0; height: 20px; background: #383838; }
.field .spin input { flex: 1; min-width: 0; height: 18px; border: 0; }
.spin-buttons { width: 16px; display: flex; flex-direction: column; }
.spin-buttons button { flex: 1; display: grid; place-items: center; background: #5e5e5e; border: 1px solid #444; }
.spin-buttons button::after { content: ""; border: 2px solid transparent; }
.spin-buttons .inc::after { border-bottom-color: #fff; border-top: 0; }
.spin-buttons .dec::after { border-top-color: #fff; border-bottom: 0; }

/* Status bar */
.statusbar {
  flex: none;
  height: 25px;
  display: flex;
  align-items: center;
  background: linear-gradient(#5a5a5a, #4a4a4a 40%, #5a5a5a);
}
.prompt { margin: 0 auto 4px 9px; }
.mode { height: 22px; width: 31px; margin-top: 3px; padding-left: 3px; border-right: 1px solid #ddd; text-align: center; white-space: nowrap; }
.mode:first-of-type { width: 36px; }
.coord { display: flex; align-items: center; width: 96px; height: 20px; }
.coord:nth-of-type(1) { margin-left: 17px; }
.axis { width: 10px; font-size: 10px; line-height: 10px; text-align: center; }
.axis input { appearance: none; display: block; width: 7px; height: 7px; margin: 0 2px; background: #fff; border: 1px solid #000; border-width: 1px 0 0 1px; }
.value { width: 74px; height: 20px; padding: 0 0 0 4px; background: #383838; border: 1px solid #999; }
.value:disabled { color: #999; }
.cell { height: 22px; padding: 0 3px; border-left: 1px solid #ddd; }
.load { width: 56px; margin-left: -6px; }
.clock { width: 61px; border-right: 1px solid #ddd; }
```
